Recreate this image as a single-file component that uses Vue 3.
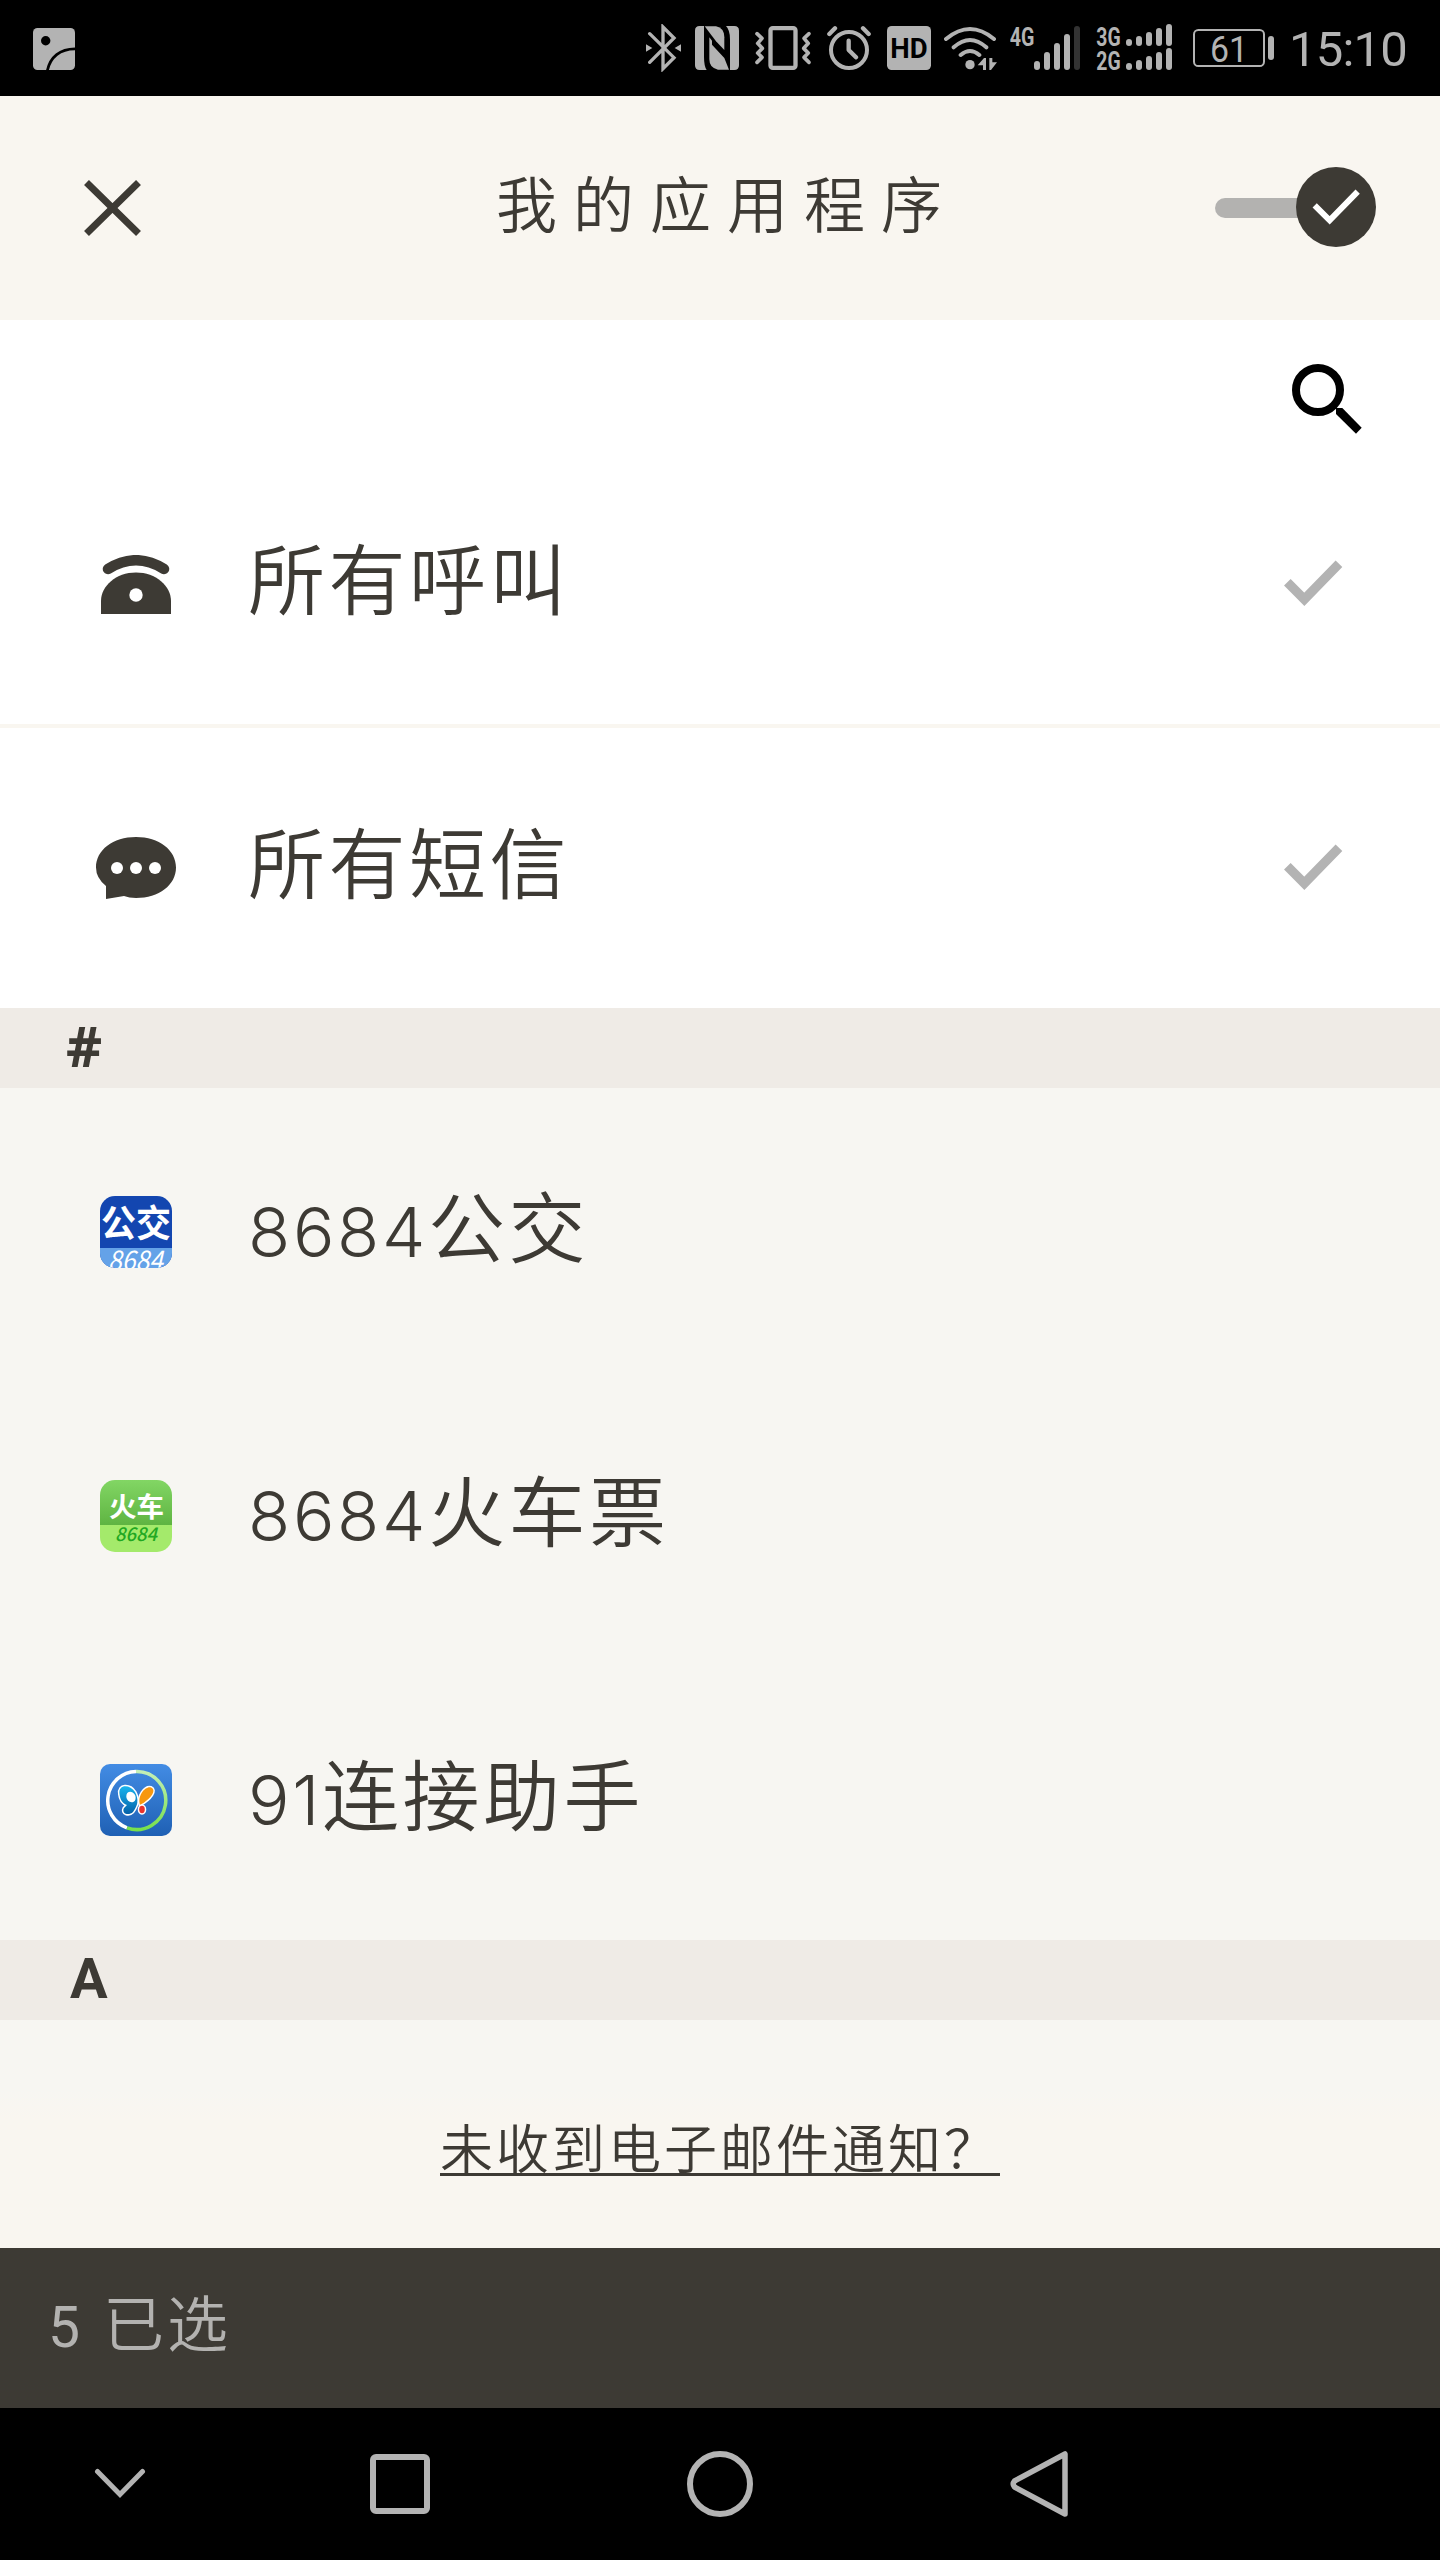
<script setup>
import { ref } from 'vue'

const enabled = ref(true)
const selected = ref(5)

const general = [
  { id: 'calls', label: '所有呼叫' },
  { id: 'sms', label: '所有短信' },
]

// latin digits are set in their own face, so they are kept apart from the name
const apps = [
  { id: 'bus', digits: '8684', label: '公交' },
  { id: 'train', digits: '8684', label: '火车票' },
  { id: 'link', digits: '91', label: '连接助手' },
]

const bars = [21, 51, 81, 111, 141]
const barTops = [183, 156, 129, 102, 78]
const dualBars = [297, 327, 357, 387, 417]
const dualTops = [117, 108, 96, 84, 72]
</script>

<template>
  <div class="screen">
    <!-- Status bar -->
    <div class="status">
      <svg class="status-photo" viewBox="0 0 42 42">
        <rect width="42" height="42" rx="4.5" fill="#b3b3b3" />
        <circle cx="12.7" cy="12.7" r="4.7" />
        <path d="M14.3 43C17 29 27 20.5 43 20.8" fill="none" stroke="#000" stroke-width="2.8" />
      </svg>

      <div class="tray">
        <svg width="36" height="48" viewBox="48 72 108 144">
          <path class="line" stroke-width="10" stroke-linecap="round" d="M59 101L132 173L99 206V81L132 114L59 187" />
          <path d="M48 133L67 144L48 155ZM153 133L134 144L153 155Z" />
        </svg>
        <svg width="47" height="48" viewBox="195 72 141 144">
          <path d="M209 78H222V170Q222 198 230 210H209Q195 210 195 196V92Q195 78 209 78Z" />
          <path d="M313 210H300V118Q300 90 288 78H313Q327 78 327 92V196Q327 210 313 210Z" />
          <path d="M224 79H258Q283 84 283 112V150L258 124Z" />
          <path d="M297 209H264Q238 204 238 178V112L246 122V134L283 174Z" />
        </svg>
        <svg width="59" height="48" viewBox="375 72 177 144">
          <rect class="line" x="421.5" y="84.5" width="75" height="119" rx="7" stroke-width="13" />
          <path class="line" stroke-width="11" stroke-linecap="round" stroke-linejoin="round" d="M381 101L396 115L383 130L397 145L383 159L396 172L381 187" />
          <path class="line" stroke-width="11" stroke-linecap="round" stroke-linejoin="round" d="M537 101L522 115L535 130L521 145L535 159L522 172L537 187" />
        </svg>
        <svg width="47" height="48" viewBox="591 72 141 144">
          <circle class="line" cx="657" cy="150" r="54" stroke-width="12" />
          <path class="line" stroke-width="13" stroke-linecap="round" stroke-linejoin="round" d="M656 122V150L678 172M598 102L615 85M716 102L699 85" />
        </svg>
        <svg width="44" height="48" viewBox="771 72 132 144">
          <rect x="771" y="78" width="132" height="132" rx="14" />
          <text x="781" y="174" font-size="84" font-weight="700" fill="#000" textLength="112" lengthAdjust="spacingAndGlyphs">HD</text>
        </svg>
        <svg width="53" height="48" viewBox="942 72 159 144">
          <path class="line" stroke-width="12" stroke-linecap="round" d="M948 117Q1020 57 1092 117M971 142Q1020 98 1069 142M992 165Q1020 141 1048 165" />
          <circle cx="1020" cy="194" r="14" />
          <path d="M1043 196L1062 174H1068V210H1059V196ZM1078 210V174H1087V187H1101L1083 210Z" />
        </svg>
        <svg width="73" height="48" viewBox="-60 72 219 144">
          <text x="-61" y="137" font-size="80" font-weight="700" textLength="74" lengthAdjust="spacingAndGlyphs">4G</text>
          <line
            v-for="(x, i) in bars"
            :key="x"
            class="bar"
            :class="{ 'bar-off': i === 4 }"
            :x1="x" :x2="x" :y1="barTops[i] + 9" y2="201"
          />
        </svg>
        <svg width="84" height="48" viewBox="198 72 252 144">
          <text x="199" y="137" font-size="80" font-weight="700" textLength="73" lengthAdjust="spacingAndGlyphs">3G</text>
          <text x="199" y="209" font-size="80" font-weight="700" textLength="73" lengthAdjust="spacingAndGlyphs">2G</text>
          <template v-for="(x, i) in dualBars" :key="x">
            <line class="bar" :x1="x" :x2="x" :y1="dualTops[i] + 9" y2="129.01" />
            <line class="bar" :x1="x" :x2="x" :y1="dualTops[i] + 81" y2="201.01" />
          </template>
        </svg>
        <svg width="87" height="48" viewBox="489 72 261 144">
          <rect class="line" x="492" y="90" width="210" height="108" rx="13" stroke-width="6" />
          <rect x="714" y="108" width="18" height="72" rx="9" />
          <text x="540" y="186" font-size="108" font-weight="400" textLength="114" lengthAdjust="spacingAndGlyphs">61</text>
        </svg>
        <div class="clock">15:10</div>
      </div>
    </div>

    <!-- Title bar -->
    <header class="header">
      <svg class="close" viewBox="0 0 57 57">
        <path d="M2.5 2.5L54.5 53.5M54.5 2.5L2.5 53.5" fill="none" stroke="#3d3a34" stroke-width="7" />
      </svg>
      <h1 class="title">我的应用程序</h1>
      <svg class="toggle" viewBox="105 111 483 240" @click="enabled = !enabled">
        <rect x="105" y="204" width="300" height="60" rx="30" fill="#b3b2b0" />
        <circle cx="468" cy="231" r="120" fill="#3d3a34" />
        <path v-if="enabled" d="M404 226L449 271L533 185" fill="none" stroke="#fff" stroke-width="18" />
      </svg>
    </header>

    <!-- Calls and messages -->
    <section class="general">
      <div class="search">
        <svg width="70" height="70" viewBox="336 702 210 210" fill="none" stroke="#000">
          <circle cx="414" cy="780" r="66" stroke-width="24" />
          <path d="M468 834H487L545 893L528 911L468 852Z" fill="#000" stroke="none" />
        </svg>
      </div>
      <div v-for="item in general" :key="item.id" class="row">
        <div class="row-icon">
          <svg v-if="item.id === 'calls'" width="70" height="59" viewBox="0 0 70 59">
            <path d="M7 14Q35 -3.5 63 14" fill="none" stroke="#3d3a34" stroke-width="10.5" stroke-linecap="round" />
            <path d="M0 59V46C0 31 15 17.5 35 17.5S70 31 70 46V59Z" fill="#3d3a34" />
            <circle cx="35" cy="40" r="6.7" fill="#fff" />
          </svg>
          <svg v-else width="80" height="62" viewBox="0 0 80 62">
            <path d="M40 0C63 0 80 13 80 30.5S63 61 40 61Q33 61 28 59L10 62V49Q0 41 0 30.5C0 13 17 0 40 0Z" fill="#3d3a34" />
            <circle cx="21" cy="31" r="6" fill="#fff" />
            <circle cx="40" cy="31" r="6" fill="#fff" />
            <circle cx="59" cy="31" r="6" fill="#fff" />
          </svg>
        </div>
        <div class="row-label">{{ item.label }}</div>
        <svg class="tick" viewBox="133 120 175 139">
          <path d="M143 187L194 238L298 131" fill="none" stroke="#b3b3b3" stroke-width="28" />
        </svg>
      </div>
    </section>

    <!-- App list -->
    <div class="letter letter-hash">#</div>
    <section class="apps">
      <div v-for="app in apps" :key="app.id" class="row">
        <div class="row-icon">
          <svg v-if="app.id === 'bus'" class="app-icon" viewBox="0 0 72 72">
            <rect width="72" height="72" fill="#1346b0" />
            <rect y="52" width="72" height="20" fill="#64a2e8" />
            <text x="1" y="41" font-size="37" font-weight="700" fill="#fff" textLength="70" lengthAdjust="spacingAndGlyphs">公交</text>
            <text x="8" y="74" font-size="27" font-weight="400" font-style="italic" fill="#fff" textLength="55" lengthAdjust="spacingAndGlyphs">8684</text>
          </svg>
          <svg v-else-if="app.id === 'train'" class="app-icon" viewBox="0 0 72 72">
            <defs>
              <linearGradient id="train-bg" x1="0" y1="0" x2="0" y2="1">
                <stop offset="0" stop-color="#82d664" />
                <stop offset="1" stop-color="#5fb442" />
              </linearGradient>
            </defs>
            <rect width="72" height="45" fill="url(#train-bg)" />
            <rect y="45" width="72" height="27" fill="#a4ea6b" />
            <text x="9" y="37" font-size="27" font-weight="700" fill="#fff" textLength="55" lengthAdjust="spacingAndGlyphs">火车</text>
            <text x="15" y="60.5" font-size="19" font-weight="500" font-style="italic" fill="#22a822" textLength="42" lengthAdjust="spacingAndGlyphs">8684</text>
          </svg>
          <svg v-else class="app-icon app-icon-link" viewBox="0 0 72 72">
            <defs>
              <linearGradient id="link-bg" x1="0" y1="0" x2="0" y2="1">
                <stop offset="0" stop-color="#438ce4" />
                <stop offset="1" stop-color="#1f60b4" />
              </linearGradient>
              <linearGradient id="link-ring" x1="0" y1="0" x2="0" y2="1">
                <stop offset="0" stop-color="#c4efb6" />
                <stop offset="1" stop-color="#77e04c" />
              </linearGradient>
              <linearGradient id="link-wing" x1="0" y1="0" x2="0" y2="1">
                <stop offset="0" stop-color="#19b5ee" />
                <stop offset="1" stop-color="#0560a8" />
              </linearGradient>
            </defs>
            <rect width="72" height="72" fill="url(#link-bg)" />
            <path d="M27 63.8A29 29 0 0 1 36 7.5" fill="none" stroke="#fff" stroke-width="3.5" />
            <path d="M36 7.5A29 29 0 1 1 27 63.8" fill="none" stroke="url(#link-ring)" stroke-width="3.5" />
            <g stroke="#fff" stroke-width="3" stroke-linejoin="round" paint-order="stroke">
              <path d="M19.5 30C18 20 30 20 35 28C39 36 38 41 33 48C29 52 21 50 24 44L27 41C22 39 20 35 19.5 30Z" fill="url(#link-wing)" />
              <path d="M40 41C37 32 45 22 51 23.5C57 26 51 35 40 41Z" fill="#f7980f" />
              <ellipse cx="42" cy="45.5" rx="2.8" ry="3.7" fill="#e8322d" />
            </g>
            <ellipse cx="31" cy="33" rx="4.5" ry="5.5" fill="#fff" transform="rotate(-25 31 33)" />
          </svg>
        </div>
        <div class="row-label">
          <span class="digits">{{ app.digits }}</span>{{ app.label }}
        </div>
      </div>
    </section>
    <div class="letter">A</div>

    <!-- Help link -->
    <div class="help">
      <a class="help-link">未收到电子邮件通知？</a>
    </div>

    <div class="count"><span class="count-num">{{ selected }}</span>已选</div>

    <!-- Navigation keys -->
    <nav class="nav">
      <svg width="52" height="32" viewBox="0 0 52 32">
        <path d="M3.5 3.5L26 26.5L48.5 3.5" stroke-width="5" stroke-linecap="round" />
      </svg>
      <svg width="60" height="60" viewBox="0 0 60 60">
        <rect x="3" y="3" width="54" height="54" rx="3" stroke-width="6" />
      </svg>
      <svg width="66" height="66" viewBox="0 0 66 66">
        <circle cx="33" cy="33" r="30" stroke-width="6" />
      </svg>
      <svg width="58" height="66" viewBox="0 0 58 66">
        <path d="M55 3V63L4.5 36Q2 33 4.5 30Z" stroke-width="5.5" stroke-linejoin="round" />
      </svg>
    </nav>
  </div>
</template>

<style>
body {
  margin: 0;
  background: #000;
}
</style>

<style scoped>
.screen {
  width: 1440px;
  height: 2560px;
  display: flex;
  flex-direction: column;
  overflow: hidden;
  background: #f7f6f2;
  color: #3d3a34;
  font-family: 'Noto Sans CJK SC', sans-serif;
  font-weight: 350;
}

svg {
  display: block;
  flex-shrink: 0;
}

/* ── Status bar ── */
.status {
  height: 96px;
  display: flex;
  align-items: center;
  justify-content: space-between;
  background: #000;
}

.status-photo {
  width: 42px;
  height: 42px;
  margin-left: 33px;
  margin-top: 2px;
}

.tray {
  display: flex;
  align-items: center;
  gap: 13px;
  color: #b3b3b3;
  fill: #b3b3b3;
  font-family: Roboto, sans-serif;
}

.line {
  fill: none;
  stroke: #b3b3b3;
}

.bar {
  stroke: #b3b3b3;
  stroke-width: 18;
  stroke-linecap: round;
}

.bar-off { stroke: #333; }

.clock {
  width: 147px;
  font-size: 49px;
  line-height: 48px;
  font-weight: 400;
  letter-spacing: -0.8px;
  text-indent: -4px;
  padding-top: 3px;
  box-sizing: border-box;
}

/* ── Title bar ── */
.header {
  height: 224px;
  display: grid;
  grid-template-columns: 1fr auto 1fr;
  align-items: center;
  background: #f9f6f0;
}

.close {
  width: 57px;
  height: 57px;
  margin-left: 84px;
}

.title {
  margin: 0;
  padding: 0 0 12px 14px;
  font-size: 61px;
  line-height: 80px;
  font-weight: 350;
  letter-spacing: 16px;
}

.toggle {
  width: 161px;
  height: 80px;
  margin: 0 64px 2px 0;
  justify-self: end;
}

/* ── Rows ── */
.general { background: #fff; }

.search {
  height: 120px;
  display: flex;
  align-items: center;
  justify-content: flex-end;
  padding-right: 78px;
  box-sizing: border-box;
}

.search svg { margin-top: 38px; }

.row {
  height: 280px;
  display: flex;
  align-items: center;
  border-top: 4px solid transparent;
}

.general .row + .row { border-top-color: #f9f6f0; }

.row-icon {
  width: 80px;
  margin-left: 96px;
  display: flex;
  justify-content: center;
}

.row-label {
  flex: 1;
  margin-left: 72px;
  padding-bottom: 17px;
  font-size: 77px;
  line-height: 100px;
  letter-spacing: 3.5px;
}

.apps .row-label { padding-bottom: 9px; }

.digits {
  font-family: Inter, sans-serif;
  font-size: 69px;
  font-weight: 300;
  letter-spacing: 2.7px;
}

.tick {
  width: 58.3px;
  height: 46.3px;
  margin-right: 97.3px;
  margin-bottom: 2px;
}

.app-icon {
  width: 72px;
  height: 72px;
  border-radius: 15px;
  font-family: 'Noto Sans CJK SC', sans-serif;
}

.app-icon-link { border-radius: 10px; }

/* ── Index letters ── */
.letter {
  height: 80px;
  padding-left: 70px;
  background: #efebe6;
  font-family: Roboto, sans-serif;
  font-size: 56px;
  line-height: 79px;
  font-weight: 700;
}

.letter-hash {
  padding-left: 66px;
  font-family: 'Open Sans', sans-serif;
  line-height: 75px;
}

/* ── Bottom ── */
.help {
  height: 228px;
  display: flex;
  justify-content: center;
  background: linear-gradient(#f7f6f2 70px, #f9f6f0 100px);
}

.help-link {
  height: 70px;
  margin-top: 83px;
  border-bottom: 3px solid #3d3a34;
  font-size: 53px;
  line-height: 86px;
  letter-spacing: 3px;
}

.count {
  height: 160px;
  padding-left: 48px;
  box-sizing: border-box;
  background: #3d3a34;
  color: #b3b2b0;
  font-size: 61px;
  line-height: 146px;
  letter-spacing: 3px;
}

.count-num {
  margin-right: 20px;
  font-family: Roboto, sans-serif;
  font-size: 57px;
  font-weight: 400;
}

.nav {
  height: 152px;
  display: grid;
  grid-template-columns: 240px 320px 320px 318px;
  align-items: center;
  justify-items: center;
  background: #000;
  fill: none;
  stroke: #b3b3b3;
}
</style>
